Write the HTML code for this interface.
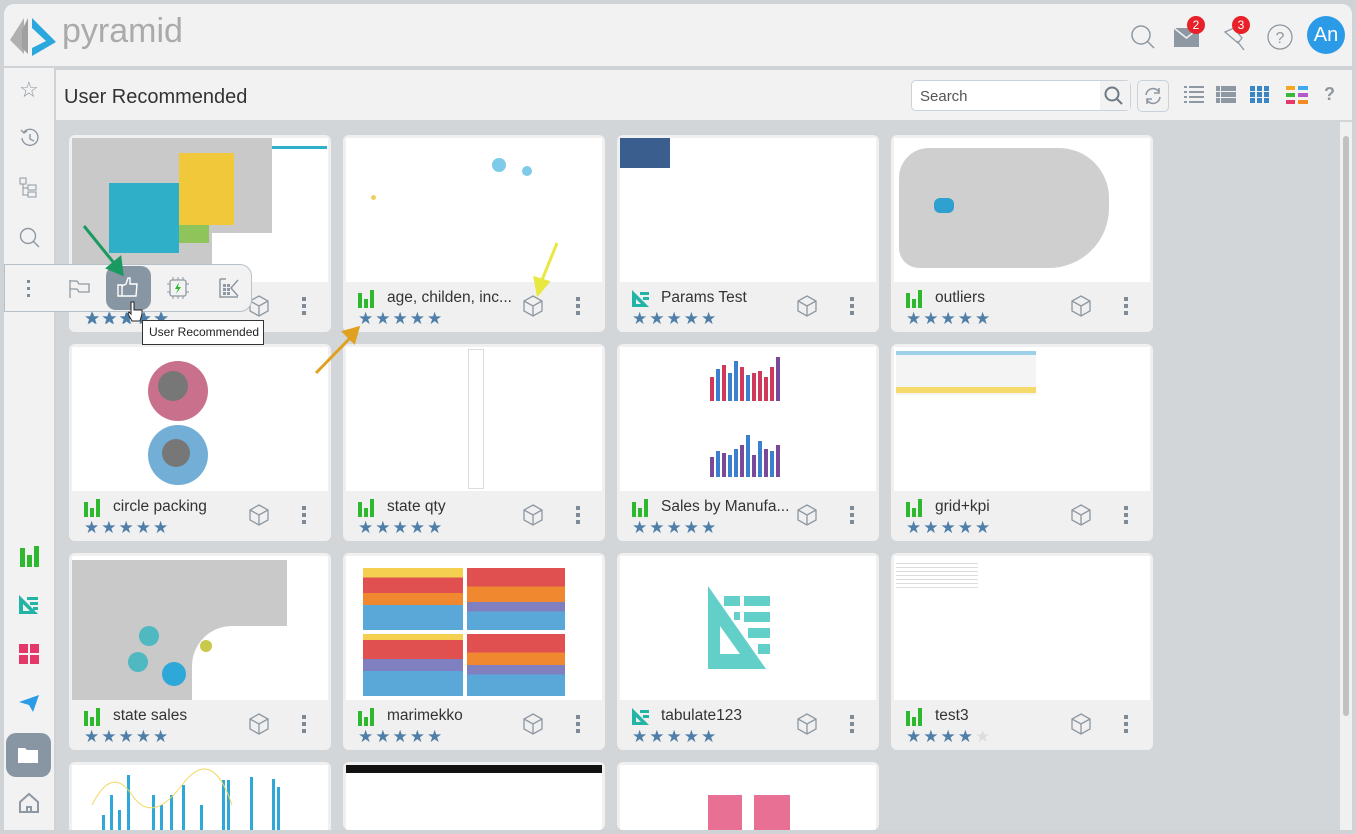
<!DOCTYPE html>
<html><head><meta charset="utf-8"><style>
*{box-sizing:border-box;margin:0;padding:0}
body{width:1356px;height:834px;background:#cfd3d6;font-family:"Liberation Sans",sans-serif;position:relative;overflow:hidden}
.top{position:absolute;left:4px;top:4px;width:1348px;height:62px;background:#f2f2f2;border-radius:10px 10px 0 0}
.side{position:absolute;left:4px;top:68px;width:50px;height:762px;background:#f2f2f2}
.main{position:absolute;left:56px;top:70px;width:1296px;height:760px;background:#d3d6d9}
.tbar{position:absolute;left:0;top:0;width:1296px;height:50px;background:#f2f2f2}
.card{position:absolute;width:262px;height:197px;background:#f0f0f0;border-radius:6px;overflow:hidden}
.img{position:absolute;left:3px;top:3px;right:3px;height:144px;background:#fff;overflow:hidden}
.name{position:absolute;left:44px;top:154px;font-size:15.5px;color:#333}
.bars{position:absolute;left:15px;top:155px;width:18px;height:18px}
.stars{position:absolute;left:15px;top:174px;font-size:17px;color:#4f7fa8;letter-spacing:2px;font-family:"DejaVu Sans",sans-serif}
.cube{position:absolute;left:180px;top:160px}
.dots{position:absolute;left:233px;top:162px;width:4px}
.dots i{display:block;width:4px;height:4px;background:#7e8a96;margin-bottom:3px}
.badge{position:absolute;width:18px;height:18px;border-radius:9px;background:#e8202a;color:#fff;font-size:12px;text-align:center;line-height:18px}
</style></head><body>
<div class="top">
 <svg style="position:absolute;left:4px;top:12px" width="50" height="42" viewBox="0 0 50 42"><path d="M16 2 L2 24 L16 38 Z" fill="#b0b0b0"/><path d="M20 2 L20 38 L14 32 L14 14Z" fill="#a0a0a0"/><path d="M24 2 L48 26 L24 40 L24 32 L38 25 L24 12Z" fill="#2aa8de"/></svg>
 <div style="position:absolute;left:58px;top:8px;font-size:34px;color:#aaaaaa;letter-spacing:0">pyramid</div>
 <svg style="position:absolute;left:1126px;top:20px" width="26" height="26"><circle cx="11" cy="11" r="9" fill="none" stroke="#8e98a2" stroke-width="1.5"/><path d="M17 17 L24 24" stroke="#8e98a2" stroke-width="1.5"/></svg>
 <svg style="position:absolute;left:1170px;top:24px" width="26" height="20"><rect x="0" y="0" width="25" height="19" fill="#8e98a2"/><path d="M0 0 L12.5 10 L25 0" fill="none" stroke="#f2f2f2" stroke-width="1.5"/></svg>
 <div class="badge" style="left:1183px;top:12px">2</div>
 <svg style="position:absolute;left:1218px;top:22px" width="26" height="26"><path d="M3 6 L12 2 L20 12 L16 17 Z M15 15 L22 24" fill="none" stroke="#8e98a2" stroke-width="1.3"/></svg>
 <div class="badge" style="left:1228px;top:12px">3</div>
 <svg style="position:absolute;left:1262px;top:19px" width="28" height="28"><circle cx="14" cy="14" r="12" fill="none" stroke="#8e98a2" stroke-width="1.3"/><text x="14" y="20" font-size="16" text-anchor="middle" fill="#8e98a2" font-family="Liberation Sans">?</text></svg>
 <div style="position:absolute;left:1303px;top:12px;width:38px;height:38px;border-radius:19px;background:#2b9be8;color:#fff;font-size:20px;text-align:center;line-height:38px">An</div>
</div>
<div class="side">
 <div style="position:absolute;left:15px;top:9px;font-size:22px;color:#8e98a2">☆</div>
 <svg style="position:absolute;left:14px;top:58px" width="24" height="24"><path d="M4 12 A8 8 0 1 0 6 6 M3 4 L6 7 L9 5 M12 8 L12 13 L16 15" fill="none" stroke="#8e98a2" stroke-width="1.4"/></svg>
 <svg style="position:absolute;left:14px;top:108px" width="22" height="24"><rect x="2" y="2" width="6" height="6" fill="none" stroke="#8e98a2"/><rect x="10" y="9" width="8" height="5" fill="none" stroke="#8e98a2"/><rect x="10" y="16" width="8" height="5" fill="none" stroke="#8e98a2"/><path d="M5 8 V19 H10 M5 12 H10" fill="none" stroke="#8e98a2"/></svg>
 <svg style="position:absolute;left:14px;top:158px" width="24" height="24"><circle cx="10" cy="10" r="7.5" fill="none" stroke="#8e98a2" stroke-width="1.4"/><path d="M15.5 15.5 L21 21" stroke="#8e98a2" stroke-width="1.4"/></svg>
 <svg style="position:absolute;left:14px;top:478px" width="22" height="22"><rect x="2" y="2" width="5" height="19" fill="#2db82d"/><rect x="9" y="9" width="5" height="12" fill="#2db82d"/><rect x="16" y="0" width="5" height="21" fill="#2db82d"/></svg>
 <svg style="position:absolute;left:14px;top:526px" width="22" height="22"><path d="M1 1 L20 20 L1 20Z" fill="#22b5a5"/><path d="M5 10 L5 17 L12 17Z" fill="#f2f2f2"/><rect x="9" y="3" width="11" height="3" fill="#22b5a5"/><rect x="12" y="8" width="8" height="3" fill="#22b5a5"/><rect x="15" y="13" width="5" height="3" fill="#22b5a5"/></svg>
 <svg style="position:absolute;left:14px;top:575px" width="22" height="22"><rect x="1" y="1" width="9" height="9" fill="#e33869"/><rect x="12" y="1" width="9" height="9" fill="#e33869"/><rect x="1" y="12" width="9" height="9" fill="#e33869"/><rect x="12" y="12" width="9" height="9" fill="#e33869"/></svg>
 <svg style="position:absolute;left:14px;top:624px" width="22" height="22"><path d="M1 10 L21 3 L15 20 L11 13Z" fill="#2b9be8"/></svg>
 <div style="position:absolute;left:2px;top:665px;width:45px;height:44px;border-radius:10px;background:#8896a4"></div>
 <svg style="position:absolute;left:14px;top:677px" width="22" height="20"><path d="M0 3 H7 L9 5 H20 V18 H0Z" fill="#fff"/></svg>
 <svg style="position:absolute;left:14px;top:724px" width="22" height="22"><path d="M2 10 L11 2 L20 10 V20 H2Z M9 20 V15 H13 V20" fill="none" stroke="#8e98a2" stroke-width="2"/></svg>
</div>
<div class="main">
 <div class="tbar">
  <div style="position:absolute;left:8px;top:16px;font-size:20px;color:#333">User Recommended</div>
  <div style="position:absolute;left:855px;top:10px;width:220px;height:31px;border:1px solid #c9d2db;border-radius:5px;background:#fff"><span style="position:absolute;left:8px;top:7px;font-size:15px;color:#555">Search</span><div style="position:absolute;right:0;top:0;width:30px;height:29px;background:#f2f2f2"></div>
   <svg style="position:absolute;right:6px;top:5px" width="20" height="20"><circle cx="8" cy="8" r="6.5" fill="none" stroke="#6f7a86" stroke-width="2"/><path d="M13 13 L18 18" stroke="#6f7a86" stroke-width="2"/></svg></div>
  <div style="position:absolute;left:1081px;top:10px;width:32px;height:32px;border:1px solid #c9d2db;border-radius:5px"></div>
  <svg style="position:absolute;left:1087px;top:16px" width="20" height="20"><path d="M3 9 A7 7 0 0 1 16 6 M17 11 A7 7 0 0 1 4 14" fill="none" stroke="#8e98a2" stroke-width="1.6"/><path d="M16 2 V7 H11 M4 18 V13 H9" fill="none" stroke="#8e98a2" stroke-width="1.6"/></svg>
  <svg style="position:absolute;left:1128px;top:16px" width="20" height="18"><g fill="#8e98a2"><rect x="0" y="0" width="3" height="2"/><rect x="5" y="0" width="15" height="2"/><rect x="0" y="5" width="3" height="2"/><rect x="5" y="5" width="15" height="2"/><rect x="0" y="10" width="3" height="2"/><rect x="5" y="10" width="15" height="2"/><rect x="0" y="15" width="3" height="2"/><rect x="5" y="15" width="15" height="2"/></g></svg>
  <svg style="position:absolute;left:1160px;top:16px" width="20" height="18"><g fill="#8e98a2"><rect x="0" y="0" width="4" height="5"/><rect x="5" y="0" width="15" height="5"/><rect x="0" y="6" width="4" height="5"/><rect x="5" y="6" width="15" height="5"/><rect x="0" y="12" width="4" height="5"/><rect x="5" y="12" width="15" height="5"/></g></svg>
  <svg style="position:absolute;left:1194px;top:16px" width="19" height="18"><g fill="#3a86c4"><rect x="0" y="0" width="5" height="5"/><rect x="7" y="0" width="5" height="5"/><rect x="14" y="0" width="5" height="5"/><rect x="0" y="6" width="5" height="5"/><rect x="7" y="6" width="5" height="5"/><rect x="14" y="6" width="5" height="5"/><rect x="0" y="12" width="5" height="5"/><rect x="7" y="12" width="5" height="5"/><rect x="14" y="12" width="5" height="5"/></g></svg>
  <svg style="position:absolute;left:1230px;top:16px" width="22" height="18"><rect x="0" y="0" width="9" height="4" fill="#f5a623"/><rect x="12" y="0" width="10" height="4" fill="#3ea8f0"/><rect x="0" y="7" width="9" height="4" fill="#3bb83b"/><rect x="12" y="7" width="10" height="4" fill="#b35ac8"/><rect x="0" y="14" width="9" height="4" fill="#e33869"/><rect x="12" y="14" width="10" height="4" fill="#f58a23"/></svg>
  <div style="position:absolute;left:1268px;top:14px;font-size:18px;font-weight:bold;color:#8e98a2">?</div>
 </div>
 <div style="position:absolute;left:1284px;top:52px;width:12px;height:708px;background:#f0f0f0"><div style="position:absolute;left:3px;top:14px;width:6px;height:580px;background:#c1c1c1;border-radius:3px"></div></div>
</div>

<div class="card" style="left:69px;top:135px"><div class="img"><div style="position:absolute;left:0;top:0;width:200px;height:144px;background:#c9c9c9"></div><div style="position:absolute;left:37px;top:45px;width:70px;height:70px;background:#2fb0c8"></div><div style="position:absolute;left:107px;top:15px;width:55px;height:72px;background:#f0c83a"></div><div style="position:absolute;left:107px;top:87px;width:30px;height:18px;background:#8fc45a"></div><div style="position:absolute;left:140px;top:95px;width:60px;height:49px;background:#fff"></div><div style="position:absolute;left:200px;top:8px;width:55px;height:3px;background:#2fb0c8"></div></div>
 <div class="stars" style="left:16px">★★★★★</div><div class="cube"><svg width="20" height="22"><path d="M10 1 L19 6 V16 L10 21 L1 16 V6Z M1 6 L10 11 L19 6 M10 11 V21" fill="none" stroke="#8e98a2" stroke-width="1.3"/></svg></div><div class="dots"><i></i><i></i><i></i></div></div>

<div class="card" style="left:343px;top:135px"><div class="img"><div style="position:absolute;left:146px;top:20px;width:14px;height:14px;border-radius:7px;background:#7dcbe8"></div><div style="position:absolute;left:176px;top:28px;width:10px;height:10px;border-radius:5px;background:#7dcbe8"></div><div style="position:absolute;left:25px;top:57px;width:5px;height:5px;border-radius:3px;background:#f0d060"></div></div>
 <svg class="bars" viewBox="0 0 18 18"><rect x="0" y="3" width="4" height="15" fill="#2db82d"/><rect x="6" y="9" width="4" height="9" fill="#2db82d"/><rect x="12" y="0" width="4" height="18" fill="#2db82d"/></svg><div class="name">age, childen, inc...</div><div class="stars">★★★★★</div><div class="cube"><svg width="20" height="22"><path d="M10 1 L19 6 V16 L10 21 L1 16 V6Z M1 6 L10 11 L19 6 M10 11 V21" fill="none" stroke="#8e98a2" stroke-width="1.3"/></svg></div><div class="dots"><i></i><i></i><i></i></div></div>

<div class="card" style="left:617px;top:135px"><div class="img"><div style="position:absolute;left:0;top:0;width:50px;height:30px;background:#3a5f8f"></div></div>
 <svg class="bars" viewBox="0 0 18 18"><path d="M0 0 L17 17 L0 17Z" fill="#22b5a5"/><path d="M4 9 L4 14 L9 14Z" fill="#f0f0f0"/><rect x="8" y="2" width="9" height="3" fill="#22b5a5"/><rect x="11" y="7" width="6" height="3" fill="#22b5a5"/></svg><div class="name">Params Test</div><div class="stars">★★★★★</div><div class="cube"><svg width="20" height="22"><path d="M10 1 L19 6 V16 L10 21 L1 16 V6Z M1 6 L10 11 L19 6 M10 11 V21" fill="none" stroke="#8e98a2" stroke-width="1.3"/></svg></div><div class="dots"><i></i><i></i><i></i></div></div>

<div class="card" style="left:891px;top:135px"><div class="img"><div style="position:absolute;left:5px;top:10px;width:210px;height:120px;background:#cfcfcf;border-radius:30px 50px 60px 20px"></div><div style="position:absolute;left:40px;top:60px;width:20px;height:15px;background:#2fa0d0;border-radius:6px"></div></div>
 <svg class="bars" viewBox="0 0 18 18"><rect x="0" y="3" width="4" height="15" fill="#2db82d"/><rect x="6" y="9" width="4" height="9" fill="#2db82d"/><rect x="12" y="0" width="4" height="18" fill="#2db82d"/></svg><div class="name">outliers</div><div class="stars">★★★★★</div><div class="cube"><svg width="20" height="22"><path d="M10 1 L19 6 V16 L10 21 L1 16 V6Z M1 6 L10 11 L19 6 M10 11 V21" fill="none" stroke="#8e98a2" stroke-width="1.3"/></svg></div><div class="dots"><i></i><i></i><i></i></div></div>

<div class="card" style="left:69px;top:344px"><div class="img"><div style="position:absolute;left:76px;top:14px;width:60px;height:60px;border-radius:30px;background:#c05878;opacity:.85"></div><div style="position:absolute;left:86px;top:24px;width:30px;height:30px;border-radius:15px;background:#777"></div><div style="position:absolute;left:76px;top:78px;width:60px;height:60px;border-radius:30px;background:#5aa0d0;opacity:.85"></div><div style="position:absolute;left:90px;top:92px;width:28px;height:28px;border-radius:14px;background:#777"></div></div>
 <svg class="bars" viewBox="0 0 18 18"><rect x="0" y="3" width="4" height="15" fill="#2db82d"/><rect x="6" y="9" width="4" height="9" fill="#2db82d"/><rect x="12" y="0" width="4" height="18" fill="#2db82d"/></svg><div class="name">circle packing</div><div class="stars">★★★★★</div><div class="cube"><svg width="20" height="22"><path d="M10 1 L19 6 V16 L10 21 L1 16 V6Z M1 6 L10 11 L19 6 M10 11 V21" fill="none" stroke="#8e98a2" stroke-width="1.3"/></svg></div><div class="dots"><i></i><i></i><i></i></div></div>

<div class="card" style="left:343px;top:344px"><div class="img"><div style="position:absolute;left:122px;top:2px;width:16px;height:140px;border:1px solid #ddd"></div></div>
 <svg class="bars" viewBox="0 0 18 18"><rect x="0" y="3" width="4" height="15" fill="#2db82d"/><rect x="6" y="9" width="4" height="9" fill="#2db82d"/><rect x="12" y="0" width="4" height="18" fill="#2db82d"/></svg><div class="name">state qty</div><div class="stars">★★★★★</div><div class="cube"><svg width="20" height="22"><path d="M10 1 L19 6 V16 L10 21 L1 16 V6Z M1 6 L10 11 L19 6 M10 11 V21" fill="none" stroke="#8e98a2" stroke-width="1.3"/></svg></div><div class="dots"><i></i><i></i><i></i></div></div>

<div class="card" style="left:617px;top:344px"><div class="img">
 <svg style="position:absolute;left:88px;top:8px" width="80" height="124"><g fill="#d03a5a"><rect x="2" y="22" width="4" height="24"/><rect x="14" y="10" width="4" height="36"/><rect x="32" y="12" width="4" height="34"/><rect x="44" y="18" width="4" height="28"/><rect x="50" y="16" width="4" height="30"/><rect x="62" y="12" width="4" height="34"/></g><g fill="#3a7fd0"><rect x="8" y="14" width="4" height="32"/><rect x="20" y="18" width="4" height="28"/><rect x="26" y="6" width="4" height="40"/><rect x="38" y="20" width="4" height="26"/></g><rect x="56" y="22" width="4" height="24" fill="#d03a5a"/><rect x="68" y="2" width="4" height="44" fill="#7a4a9a"/>
 <g fill="#7a4a9a"><rect x="2" y="102" width="4" height="20"/><rect x="14" y="98" width="4" height="24"/><rect x="32" y="90" width="4" height="32"/><rect x="44" y="100" width="4" height="22"/><rect x="56" y="94" width="4" height="28"/><rect x="68" y="90" width="4" height="32"/></g><g fill="#3a7fd0"><rect x="8" y="96" width="4" height="26"/><rect x="20" y="100" width="4" height="22"/><rect x="26" y="94" width="4" height="28"/><rect x="38" y="80" width="4" height="42"/><rect x="50" y="86" width="4" height="36"/><rect x="62" y="96" width="4" height="26"/></g></svg></div>
 <svg class="bars" viewBox="0 0 18 18"><rect x="0" y="3" width="4" height="15" fill="#2db82d"/><rect x="6" y="9" width="4" height="9" fill="#2db82d"/><rect x="12" y="0" width="4" height="18" fill="#2db82d"/></svg><div class="name">Sales by Manufa...</div><div class="stars">★★★★★</div><div class="cube"><svg width="20" height="22"><path d="M10 1 L19 6 V16 L10 21 L1 16 V6Z M1 6 L10 11 L19 6 M10 11 V21" fill="none" stroke="#8e98a2" stroke-width="1.3"/></svg></div><div class="dots"><i></i><i></i><i></i></div></div>

<div class="card" style="left:891px;top:344px"><div class="img"><div style="position:absolute;left:2px;top:4px;width:140px;height:44px;background:#f4f4f4;border-top:4px solid #9ccfe8"></div><div style="position:absolute;left:2px;top:40px;width:140px;height:6px;background:#f5d96a"></div></div>
 <svg class="bars" viewBox="0 0 18 18"><rect x="0" y="3" width="4" height="15" fill="#2db82d"/><rect x="6" y="9" width="4" height="9" fill="#2db82d"/><rect x="12" y="0" width="4" height="18" fill="#2db82d"/></svg><div class="name">grid+kpi</div><div class="stars">★★★★★</div><div class="cube"><svg width="20" height="22"><path d="M10 1 L19 6 V16 L10 21 L1 16 V6Z M1 6 L10 11 L19 6 M10 11 V21" fill="none" stroke="#8e98a2" stroke-width="1.3"/></svg></div><div class="dots"><i></i><i></i><i></i></div></div>

<div class="card" style="left:69px;top:553px"><div class="img"><div style="position:absolute;left:0;top:4px;width:215px;height:140px;background:#c9c9c9"></div><div style="position:absolute;left:120px;top:70px;width:100px;height:74px;background:#fff;border-radius:40px 0 0 0"></div><div style="position:absolute;left:67px;top:70px;width:20px;height:20px;border-radius:10px;background:#4fb8c0"></div><div style="position:absolute;left:56px;top:96px;width:20px;height:20px;border-radius:10px;background:#4fb8c0"></div><div style="position:absolute;left:90px;top:106px;width:24px;height:24px;border-radius:12px;background:#2ea8d8"></div><div style="position:absolute;left:128px;top:84px;width:12px;height:12px;border-radius:6px;background:#c8c84a"></div></div>
 <svg class="bars" viewBox="0 0 18 18"><rect x="0" y="3" width="4" height="15" fill="#2db82d"/><rect x="6" y="9" width="4" height="9" fill="#2db82d"/><rect x="12" y="0" width="4" height="18" fill="#2db82d"/></svg><div class="name">state sales</div><div class="stars">★★★★★</div><div class="cube"><svg width="20" height="22"><path d="M10 1 L19 6 V16 L10 21 L1 16 V6Z M1 6 L10 11 L19 6 M10 11 V21" fill="none" stroke="#8e98a2" stroke-width="1.3"/></svg></div><div class="dots"><i></i><i></i><i></i></div></div>

<div class="card" style="left:343px;top:553px"><div class="img">
 <div style="position:absolute;left:17px;top:12px;width:100px;height:62px;background:linear-gradient(#f5d050 0 15%,#e05050 15% 40%,#f08830 40% 60%,#5aa8d8 60%)"></div>
 <div style="position:absolute;left:121px;top:12px;width:98px;height:62px;background:linear-gradient(#e05050 0 30%,#f08830 30% 55%,#8080c0 55% 70%,#5aa8d8 70%)"></div>
 <div style="position:absolute;left:17px;top:78px;width:100px;height:62px;background:linear-gradient(#f5d050 0 10%,#e05050 10% 40%,#8080c0 40% 60%,#5aa8d8 60%)"></div>
 <div style="position:absolute;left:121px;top:78px;width:98px;height:62px;background:linear-gradient(#e05050 0 30%,#f08830 30% 50%,#8080c0 50% 65%,#5aa8d8 65%)"></div></div>
 <svg class="bars" viewBox="0 0 18 18"><rect x="0" y="3" width="4" height="15" fill="#2db82d"/><rect x="6" y="9" width="4" height="9" fill="#2db82d"/><rect x="12" y="0" width="4" height="18" fill="#2db82d"/></svg><div class="name">marimekko</div><div class="stars">★★★★★</div><div class="cube"><svg width="20" height="22"><path d="M10 1 L19 6 V16 L10 21 L1 16 V6Z M1 6 L10 11 L19 6 M10 11 V21" fill="none" stroke="#8e98a2" stroke-width="1.3"/></svg></div><div class="dots"><i></i><i></i><i></i></div></div>

<div class="card" style="left:617px;top:553px"><div class="img"><svg style="position:absolute;left:88px;top:30px" width="84" height="86"><path d="M0 0 L58 83 L0 83Z" fill="#62d0c8"/><path d="M12 40 L12 68 L32 68Z" fill="#fff"/><path d="M14 0 L22 0 L84 86 L72 86Z" fill="#fff"/><rect x="16" y="10" width="16" height="10" fill="#62d0c8"/><rect x="36" y="10" width="26" height="10" fill="#62d0c8"/><rect x="26" y="26" width="6" height="8" fill="#62d0c8"/><rect x="36" y="26" width="26" height="10" fill="#62d0c8"/><rect x="40" y="42" width="22" height="10" fill="#62d0c8"/><rect x="50" y="58" width="12" height="10" fill="#62d0c8"/></svg></div>
 <svg class="bars" viewBox="0 0 18 18"><path d="M0 0 L17 17 L0 17Z" fill="#22b5a5"/><path d="M4 9 L4 14 L9 14Z" fill="#f0f0f0"/><rect x="8" y="2" width="9" height="3" fill="#22b5a5"/><rect x="11" y="7" width="6" height="3" fill="#22b5a5"/></svg><div class="name">tabulate123</div><div class="stars">★★★★★</div><div class="cube"><svg width="20" height="22"><path d="M10 1 L19 6 V16 L10 21 L1 16 V6Z M1 6 L10 11 L19 6 M10 11 V21" fill="none" stroke="#8e98a2" stroke-width="1.3"/></svg></div><div class="dots"><i></i><i></i><i></i></div></div>

<div class="card" style="left:891px;top:553px"><div class="img"><div style="position:absolute;left:2px;top:4px;width:82px;height:28px;background:repeating-linear-gradient(#fff 0 3px,#ddd 3px 4px)"></div></div>
 <svg class="bars" viewBox="0 0 18 18"><rect x="0" y="3" width="4" height="15" fill="#2db82d"/><rect x="6" y="9" width="4" height="9" fill="#2db82d"/><rect x="12" y="0" width="4" height="18" fill="#2db82d"/></svg><div class="name">test3</div><div class="stars">★★★★<span style="color:#ddd">★</span></div><div class="cube"><svg width="20" height="22"><path d="M10 1 L19 6 V16 L10 21 L1 16 V6Z M1 6 L10 11 L19 6 M10 11 V21" fill="none" stroke="#8e98a2" stroke-width="1.3"/></svg></div><div class="dots"><i></i><i></i><i></i></div></div>

<div class="card" style="left:69px;top:762px;height:68px;border-radius:6px 6px 0 0"><div class="img" style="height:65px"><svg width="256" height="65"><g fill="#2ea8d8"><rect x="30" y="50" width="3" height="15"/><rect x="38" y="30" width="3" height="35"/><rect x="46" y="45" width="3" height="20"/><rect x="55" y="10" width="3" height="55"/><rect x="80" y="30" width="3" height="35"/><rect x="88" y="40" width="3" height="25"/><rect x="98" y="30" width="3" height="35"/><rect x="110" y="20" width="3" height="45"/><rect x="128" y="40" width="3" height="25"/><rect x="150" y="15" width="3" height="50"/><rect x="155" y="15" width="3" height="50"/><rect x="178" y="12" width="3" height="53"/><rect x="200" y="14" width="3" height="51"/><rect x="205" y="22" width="3" height="43"/></g><path d="M20 40 Q40 0 60 30 T110 20 T160 40" fill="none" stroke="#f0d860"/></svg></div></div>
<div class="card" style="left:343px;top:762px;height:68px"><div class="img" style="height:65px"><div style="height:8px;background:#111"></div></div></div>
<div class="card" style="left:617px;top:762px;height:68px"><div class="img" style="height:65px"><div style="position:absolute;left:88px;top:30px;width:34px;height:40px;background:#e87095"></div><div style="position:absolute;left:134px;top:30px;width:36px;height:40px;background:#e87095"></div></div></div>

<div style="position:absolute;left:4px;top:264px;width:248px;height:48px;background:#f2f2f2;border:1px solid #b8c0c8;border-radius:0 12px 12px 0"></div>
<div style="position:absolute;left:27px;top:280px;width:4px"><i style="display:block;width:3px;height:3px;background:#7e8a96;margin-bottom:4px"></i><i style="display:block;width:3px;height:3px;background:#7e8a96;margin-bottom:4px"></i><i style="display:block;width:3px;height:3px;background:#7e8a96"></i></div>
<svg style="position:absolute;left:68px;top:278px" width="24" height="22"><path d="M2 2 V20 M2 3 H9 L11 6 H21 V14 H11 L9 11 H2" fill="none" stroke="#8e98a2" stroke-width="1.3"/></svg>
<div style="position:absolute;left:106px;top:266px;width:45px;height:44px;border-radius:10px;background:#8896a4"></div>
<svg style="position:absolute;left:117px;top:276px" width="22" height="22"><path d="M1 9 H5 V20 H1Z M5 10 L9 8 L11 2 L13 2 L13 8 H20 L19 20 H5" fill="none" stroke="#fff" stroke-width="1.4"/></svg>
<svg style="position:absolute;left:167px;top:277px" width="22" height="22"><rect x="3" y="3" width="16" height="16" rx="2" fill="none" stroke="#8e98a2" stroke-width="1.3"/><path d="M6 0 V3 M11 0 V3 M16 0 V3 M6 19 V22 M11 19 V22 M16 19 V22 M0 7 H3 M0 15 H3 M19 7 H22 M19 15 H22" stroke="#8e98a2"/><path d="M12 5 L8 12 H11 L9 17 L14 10 H11Z" fill="#2db82d"/></svg>
<svg style="position:absolute;left:218px;top:277px" width="22" height="22"><path d="M2 2 V20 H20 M2 2 H8" fill="none" stroke="#8e98a2" stroke-width="1.5"/><g fill="#8e98a2"><rect x="5" y="7" width="3" height="3"/><rect x="9" y="7" width="3" height="3"/><rect x="5" y="11" width="3" height="3"/><rect x="9" y="11" width="3" height="3"/><rect x="5" y="15" width="3" height="3"/><rect x="9" y="15" width="3" height="3"/></g><path d="M20 3 L13 11 L20 19" fill="none" stroke="#8e98a2" stroke-width="1.5"/></svg>
<div style="position:absolute;left:84px;top:309px;font-size:17px;color:#4f7fa8;letter-spacing:2px;font-family:'DejaVu Sans',sans-serif">★★★★★</div>
<div style="position:absolute;left:142px;top:320px;width:122px;height:25px;background:#fff;border:1px solid #333;font-size:12px;color:#222;line-height:23px;padding-left:6px">User Recommended</div>
<svg style="position:absolute;left:126px;top:300px" width="18" height="24"><path d="M5 2 V14 L3 12 L2 14 L6 21 H14 L16 14 V10 H8 V2Z" fill="#fff" stroke="#222" stroke-width="1"/></svg>
<svg style="position:absolute;left:0;top:0" width="1356" height="834"><g stroke-width="3" fill="none"><path d="M84 226 L118 268" stroke="#1a9a60"/><path d="M108 268 L122 274 L120 258Z" fill="#1a9a60" stroke="#1a9a60"/><path d="M557 243 L540 285" stroke="#e8e840"/><path d="M535 278 L538 294 L548 282Z" fill="#e8e840" stroke="#e8e840"/><path d="M316 373 L352 336" stroke="#e0a020"/><path d="M344 332 L358 328 L354 342Z" fill="#e0a020" stroke="#e0a020"/></g></svg>
</body></html>
